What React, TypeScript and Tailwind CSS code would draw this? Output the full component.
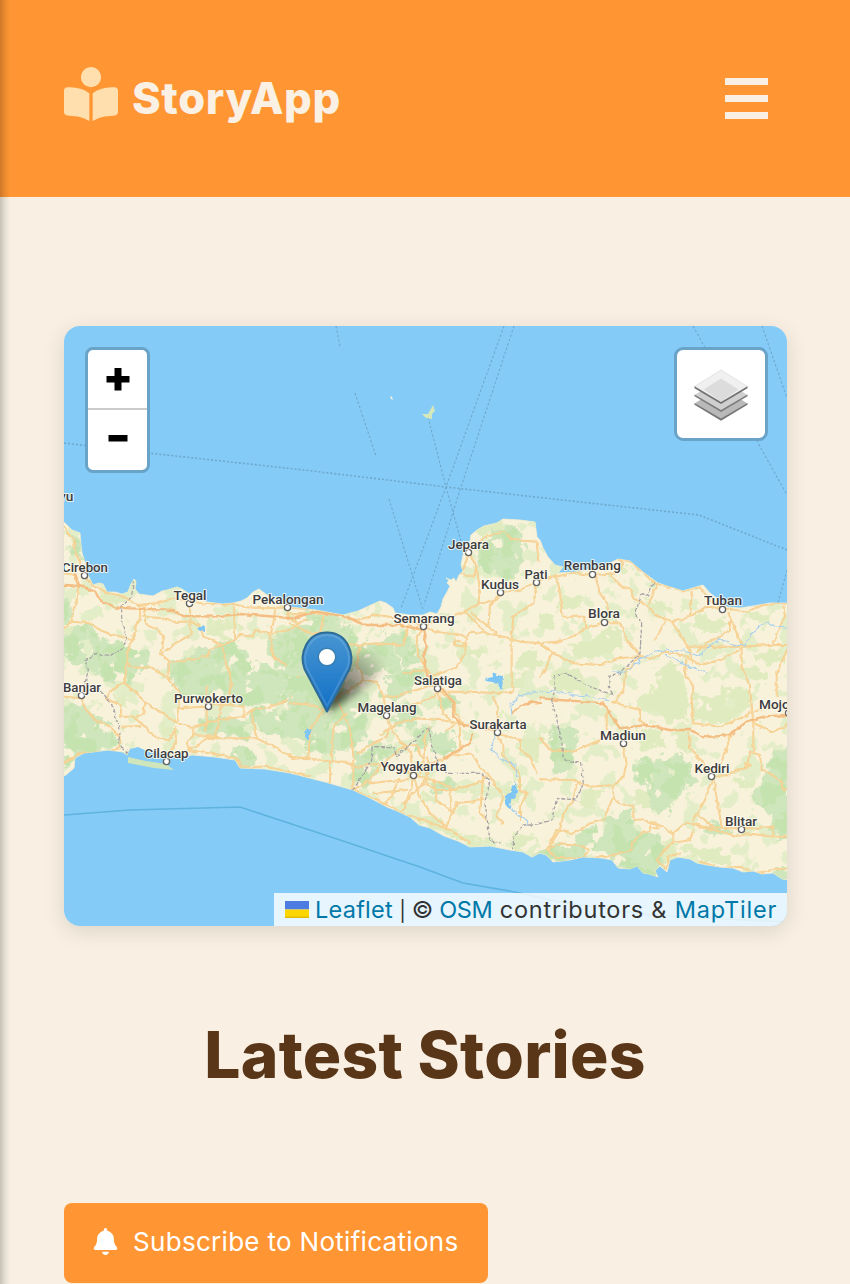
import { FaBookOpenReader, FaBell } from "react-icons/fa6";

const LAND =
  "M60 519 L66 524 72 530 80 533 81 545 82 553 85 562 88 575 93 585 99 583 103 584 107 592 115 592 122 594 128 592 131 584 134 579 136 581 135 589 139 594 153 596 162 591 167 590 177 587 182 589 188 593 197 598 207 602 223 604 233 603 241 601 247 598 253 592 259 589 267 595 277 600 290 607 316 610 343 615 358 611 371 605 380 601 386 603 393 608 395 613 410 615 423 615 430 612 437 614 441 607 443 599 447 592 450 586 447 583 449 580 446 578 451 580 454 578 456 582 459 575 463 571 461 565 463 555 465 547 470 541 471 535 477 530 484 526 497 523 503 519 520 520 535 522 537 537 540 540 543 548 548 557 555 565 563 567 558 573 575 572 593 569 606 565 618 559 630 561 643 572 658 583 670 587 683 591 696 587 703 585 710 593 719 600 727 607 740 608 753 606 770 603 790 603 L790 880 782 879 773 873 762 874 753 871 743 872 733 868 720 867 707 865 697 863 690 859 678 857 670 860 667 872 660 866 655 871 658 877 649 874 643 873 637 866 630 869 618 868 612 860 602 858 583 857 570 860 553 862 546 855 540 853 532 857 523 852 510 850 490 846 470 847 458 841 444 836 430 828 419 825 410 817 397 811 387 807 370 798 353 790 325 782 290 773 265 769 240 768 235 760 215 757 193 755 170 757 150 758 138 753 130 748 127 755 123 752 108 750 93 752 84 753 75 758 74 768 66 775 60 777Z";

// Each region is drawn on its own grid of three units to a map pixel.
const WEST = {
  forest: [
    "M10 460 L60 410 100 420 120 450 175 465 205 475 265 500 260 530 210 535 200 575 140 570 110 545 70 520 10 490Z",
    "M10 650 L70 660 110 690 150 710 170 760 110 780 50 795 12 820Z",
    "M325 530 L380 510 460 475 510 455 590 530 640 540 690 560 690 620 610 645 570 640 510 620 480 600 440 610 360 600 340 570Z",
    "M630 445 L700 430 750 430 750 640 700 620 710 540 650 510 625 480Z",
    "M470 700 L550 690 580 720 560 740 470 735Z",
    "M585 665 L660 670 720 690 750 710 750 750 640 730 580 710Z",
    "M205 790 L300 810 335 840 280 835 200 825Z",
    "M530 780 L570 790 575 825 535 830Z",
    "M40 140 L65 150 60 195 45 200Z",
    "M12 330 L25 350 30 390 12 400Z",
    "M420 690 L460 700 455 730 430 720Z",
  ],
  grove: [
    "M440 400 L510 390 550 415 540 450 470 445 430 430Z",
    "M150 600 L190 610 210 660 170 640Z",
    "M340 520 L380 520 370 570 340 560Z",
    "M130 310 L200 330 180 345 120 330Z",
    "M650 410 L700 400 720 430 640 440Z",
    "M310 700 L350 715 340 750 300 720Z",
    "M12 420 L60 410 90 430 30 450Z",
  ],
  roads: [
    "M12 110 L38 145 50 190 62 225 80 265 100 285 140 308 190 320 235 345 290 340 345 325 390 335 450 343 520 342 560 352 620 355 680 352 750 358",
    "M12 250 L45 255 55 285 50 330 40 360 35 395 12 415",
    "M35 395 L90 400 120 420 150 432 220 448",
    "M240 345 L240 380 220 440 205 475 200 520 195 575 150 605 140 625 185 650 180 680 220 680 260 715 290 745 325 750 350 715 345 760 335 780",
    "M255 350 L255 400 290 415 312 440 308 465 300 490 330 515 400 508 440 500 450 475 490 465 520 450 540 435 580 440 585 420 630 430 690 420 715 400 750 380",
    "M250 380 L310 385 340 395 390 395 420 405 430 440 485 465 495 510 515 580 505 620 480 655 475 700 465 740 400 735 380 755 385 775 410 770 440 745 530 745 590 745 640 770 700 805 750 808",
    "M390 345 L392 435 345 460 308 488",
    "M522 342 L525 440", "M645 360 L640 400 630 440 640 500 690 535 725 545 700 580 690 630",
    "M205 520 L215 530 270 530 320 560 360 610 355 650 350 700",
    "M325 520 L325 555", "M195 580 L260 640 310 670 350 700 395 710 440 700 475 690 550 680 575 660 630 650 690 630 720 630 750 645",
    "M12 620 L65 625 75 655 105 690 150 710 180 740 180 775 140 785 60 790 12 820",
    "M185 710 L240 708", "M255 640 L250 670 230 680",
    "M350 655 L435 650 470 640 550 650 550 680", "M440 650 L440 700 435 725",
    "M575 660 L580 700 590 745", "M400 710 L400 740", "M385 780 L480 795 530 805 545 830 620 830 750 860",
    "M440 650 L440 590", "M683 355 L685 380 710 400",
  ],
  highways: [
    "M12 285 L55 287 105 305 120 330 165 353 230 356 340 360 370 378 460 380 540 372 620 378 700 385 750 370",
    "M45 250 L58 290",
  ],
  borders: ["M220 270 L215 320 185 350 185 400 200 440 190 475 150 497 110 490 75 510 85 540 75 580 120 598 160 650 180 730 175 760 205 790"],
};

const CENTRAL = {
  forest: [
    "M570 170 L610 140 650 110 690 140 690 210 670 260 610 240 570 220Z",
    "M0 430 L80 400 170 410 200 460 180 600 190 620 230 650 220 740 170 780 70 780 50 720 0 700Z",
    "M180 480 L260 460 310 470 330 540 290 550 220 540Z",
    "M330 475 L380 470 390 510 350 525Z",
    "M290 580 L350 545 400 555 370 590 320 620 280 610Z",
    "M170 630 L220 610 230 640 200 680 170 670Z",
    "M300 665 L380 650 400 680 360 700 310 695Z",
    "M370 720 L415 710 425 770 395 765Z",
    "M435 740 L490 730 490 770 460 790 430 775Z",
    "M200 790 L240 780 260 850 220 890 190 870Z",
    "M240 770 L300 765 310 790 270 800Z",
    "M290 430 L340 440 350 465 280 460Z",
    "M460 610 L500 630 490 650 455 640Z",
    "M430 880 L480 870 490 890 440 900Z",
    "M60 370 L130 375 150 390 80 390Z",
  ],
  grove: [
    "M500 470 L580 480 570 510 500 500Z", "M680 490 L750 480 750 540 670 530Z",
    "M640 560 L710 550 700 590 640 590Z", "M360 980 L440 990 500 1030 620 1060 550 1070 440 1020Z",
    "M640 900 L700 880 690 930 640 940Z", "M670 1030 L750 1050 750 1090 670 1070Z",
    "M580 90 L650 90 620 130 560 140Z", "M400 900 L450 920 430 950 400 940Z",
    "M500 890 L560 900 550 920 500 910Z", "M690 750 L750 740 750 820 700 800Z",
  ],
  roads: [
    "M0 370 L60 368 140 375 200 390 260 375 310 382 360 395 400 410 440 425 530 440 545 425 620 435 690 455 750 460",
    "M0 400 L40 420 100 440 130 460 210 465 260 460 340 465 350 430 355 405",
    "M400 410 L440 390 510 370 560 345 610 330 640 305 690 300 730 280 750 270",
    "M535 190 L525 230 510 250 550 260 560 230 540 195 M560 230 L570 300 565 340",
    "M540 170 L590 140 640 125 670 150 740 155 745 210",
    "M632 310 L600 345 595 410 M525 365 L570 410 590 430",
    "M545 370 L620 430", "M740 280 L730 340 670 380 665 440 665 480 665 570 670 605 620 610 540 605 450 605",
    "M530 445 L525 490 500 530 450 550 420 565",
    "M495 450 L530 460 520 470 495 465 495 445",
    "M210 465 L200 520 220 570 180 600 140 625 160 670 180 720 190 790 190 900",
    "M220 570 L260 575 280 620 290 670 300 710 330 750 360 785 370 850 365 890 340 960",
    "M285 620 L320 620 380 600 440 580",
    "M340 550 L400 540 420 565 450 600 430 620 380 640 330 660",
    "M270 735 L320 700 380 685 450 690 510 700",
    "M0 640 L70 645 100 660 60 720 55 805 M0 800 L60 805 120 815 170 815 200 835 250 820 310 830 370 855",
    "M120 815 L120 880 M170 670 L130 710 125 810",
    "M300 710 L290 740 200 790 M190 900 L240 870 270 830 340 770 380 765 400 810 410 880 440 900 490 900 560 880 590 860",
    "M370 855 L320 880 300 930 280 945 M370 855 L430 870 440 930 490 970 500 940 580 930",
    "M370 855 L390 920 420 970 470 1010 485 970 480 890 430 870 M240 880 L330 870 M250 910 L350 900 M340 940 L400 880 420 830 410 800",
    "M440 580 L460 670 490 700 M450 605 L495 640 495 665 520 700 M510 700 L510 780 M495 705 L470 720 M510 780 L470 805 420 820",
    "M470 800 L545 790 570 830 600 860 640 920 620 980 640 1000 M620 730 L640 770 640 800 690 850 690 900 710 910 690 950 690 990",
    "M620 730 L690 750 690 780 720 800 740 850 M620 730 L625 660 610 620",
    "M190 900 L280 940 350 975 400 990 480 1020 540 1060",
    "M100 380 L90 430 60 430 M415 710 L405 760 M580 860 L570 970 590 990",
    "M400 410 L380 440 385 500 420 550 M405 740 L405 790 390 850",
  ],
  highways: [
    "M0 385 L80 365 170 380 220 405 330 405 400 420 410 470 400 500 410 550 460 600 490 640 490 680 520 705 550 710 620 720",
    "M550 730 L540 760 490 790 460 805", "M665 670 L690 650 730 635 750 640",
  ],
  borders: ["M190 900 L245 810 250 770 310 770 320 800 415 710 435 800 470 850 570 850 600 870 585 940 600 1050 630 1060", "M670 1080 L670 1040 700 1005 750 1005"],
};

const EAST = {
  forest: [
    "M290 800 L350 775 390 780 420 770 460 830 430 860 400 890 380 930 340 920 330 860 290 830Z",
    "M40 680 L80 690 110 710 90 760 80 810 40 820 35 740Z",
    "M120 1000 L180 970 240 950 275 920 280 1000 360 1010 360 1080 340 1130 280 1110 220 1095 220 1050 130 1030Z",
    "M0 1055 L60 1040 130 1045 130 1070 50 1080Z",
    "M690 780 L741 750 741 1000 710 1010 700 940 650 900Z",
    "M480 980 L530 970 570 990 520 1000Z",
    "M700 1110 L741 1110 741 1140Z",
  ],
  grove: [
    "M60 295 L130 290 130 330 60 330Z", "M0 345 L50 350 40 380 0 390Z",
    "M90 430 L160 410 230 375 250 440 200 470 110 480Z", "M30 510 L110 510 150 560 200 570 200 590 40 570Z",
    "M270 600 L340 560 380 480 420 500 440 560 450 670 390 680 330 630Z",
    "M460 590 L530 580 570 550 630 570 630 630 560 670 470 660Z",
    "M560 520 L620 500 690 510 680 540 600 535Z", "M640 460 L730 450 740 490 660 490Z",
    "M470 330 L560 370 540 400 460 390Z", "M630 335 L690 345 680 365 600 370Z",
    "M280 700 L360 690 390 750 310 750Z", "M400 680 L440 700 450 760 420 750Z",
    "M340 1070 L390 1010 450 1040 430 1080 380 1110Z", "M440 1040 L530 1050 620 1090 570 1100 450 1070Z",
    "M140 870 L190 880 160 920 100 930Z", "M280 870 L330 870 330 920 280 910Z",
    "M310 290 L380 310 400 340 330 330Z", "M240 190 L265 205 245 220Z", "M580 840 L640 830 640 860 590 860Z",
  ],
  roads: [
    "M0 240 L50 230 100 218 160 225 230 220 250 190 235 180 270 183 310 215 345 250 430 272 480 262 510 300 550 325 620 335 670 315 741 310",
    "M50 225 L60 280 68 350 130 350 140 385 M165 225 L180 280 200 310 205 330 M210 220 L245 260 270 265 280 295 320 315 345 345 400 365 450 350 500 320 550 325",
    "M0 430 L50 425 100 408 140 385 180 370 240 370 260 420 300 465",
    "M0 430 L40 460 100 490 180 495 240 475 300 468 340 475 380 455 440 470 480 495 540 480 600 450",
    "M350 255 L325 315 M455 275 L450 350 M395 365 L440 430 460 490 M375 365 L345 420",
    "M570 340 L570 390 500 430 470 455 M565 340 L605 435 605 500 630 560 640 670 640 760",
    "M440 440 L530 440 600 440 690 435 741 435 M730 320 L735 350 710 400 700 435 M741 450 L710 520 710 590",
    "M440 470 L435 520 460 560 455 600 460 670 540 680 600 655 640 635 710 620 M0 530 L15 515 35 455",
    "M300 470 L255 520 250 570 220 610 M220 605 L260 620 300 630 300 660 320 680 M200 620 L200 690",
    "M0 715 L30 750 100 755 180 720 M250 740 L260 790 250 830 220 855 220 890 240 910 280 920 280 955 350 970 400 1000 440 965 490 980 560 985 640 985 700 980 700 1010 741 1010",
    "M0 838 L100 840 150 860 220 855 M220 890 L190 960 150 970 100 1000 50 990 20 1050 50 1070 130 1075 200 1070 270 1050 290 1010 330 990 330 970 355 975 355 985 330 985",
    "M445 690 L450 740 500 805 M570 710 L550 780 510 830 M520 835 L545 980 M520 830 L495 900 460 960 M515 830 L560 825 620 800 630 755 660 765 665 805 720 840 730 870 741 865",
    "M640 670 L700 695 741 675 M620 800 L615 790 635 795 Z M460 990 L450 1020 390 1030 350 1080 380 1110 385 1070 420 1060",
    "M600 1010 L620 1000 700 1010 M460 975 L600 1010 M470 940 L520 980 M400 1000 L400 1030",
    "M110 850 L100 900 70 940 60 990 20 1050 60 1030 120 1035 145 1050 130 1075",
    "M480 1085 L540 1105 600 1100 640 1120 700 1110 741 1105",
  ],
  highways: ["M0 595 L60 600 130 605 190 610 215 650 240 685 320 675 390 690 450 690 490 712 570 705 620 665 670 650 741 645"],
  borders: ["M340 250 L325 285 305 285 285 340 305 370 300 460 240 520 210 525 205 560 220 585 150 560 80 520 45 530 45 570 35 600 60 700 75 780 125 790 130 850 110 900 50 895 35 960 0 970"],
};

function Region({ data, at }: { data: typeof WEST; at: string }) {
  return (
    <g transform={at} fill="none" strokeLinejoin="round" strokeLinecap="round">
      <g filter="url(#rough)">
        {data.grove.map((d) => <path key={d} d={d} fill="#e0ecc0" />)}
        {data.forest.map((d) => <path key={d} d={d} fill="#cfe5bb" stroke="#cfe5bb" strokeWidth="16" />)}
      </g>
      <g filter="url(#dense)">
        {data.forest.map((d) => <path key={d} d={d} fill="#c5e3ae" />)}
      </g>
      <g filter="url(#wiggle)">
        {data.roads.map((d) => <path key={d} d={d} stroke="#f5cc8c" strokeWidth="5.8" />)}
        {data.roads.map((d) => <path key={d + "c"} d={d} stroke="#fadba2" strokeWidth="2.2" />)}
        {data.highways.map((d) => <path key={d} d={d} stroke="#f4bd82" strokeWidth="7" />)}
        {data.borders.map((d) => <path key={d} d={d} stroke="#a5a1a4" strokeWidth="3.8" strokeDasharray="9 8" />)}
      </g>
    </g>
  );
}

const CITIES: [string, number, number, number, number, number][] = [
  ["Cirebon", 85, 571.5, 46, 84.5, 575.5],
  ["Tegal", 190, 599.5, 33, 189.5, 603.5],
  ["Pekalongan", 288, 604, 71, 287.5, 607.5],
  ["Jepara", 468.5, 549, 41, 468.5, 552.5],
  ["Kudus", 500, 588.5, 38, 500.5, 592.5],
  ["Pati", 536, 578.5, 23, 536.5, 582.5],
  ["Rembang", 592.3, 570, 57, 592.5, 574.5],
  ["Semarang", 424, 622.5, 61, 423.5, 626.5],
  ["Blora", 604, 618, 32, 604.5, 622.5],
  ["Tuban", 723, 605, 38, 722.5, 609.5],
  ["Salatiga", 438, 684.5, 48, 437.5, 688.5],
  ["Purwokerto", 208.5, 702.5, 69, 208.5, 706.5],
  ["Magelang", 387, 711.5, 59, 386.5, 715.5],
  ["Banjar", 82, 691.5, 38, 81.5, 695.5],
  ["Surakarta", 498, 728.5, 57, 497.5, 732.5],
  ["Madiun", 623, 739.5, 46, 623.5, 743.5],
  ["Yogyakarta", 413.5, 771, 66, 413.5, 775.5],
  ["Cilacap", 166.5, 757.5, 44, 166.5, 761.5],
  ["Kediri", 712, 773, 35, 711.5, 776.5],
  ["Blitar", 741, 825.5, 32, 741.5, 829.5],
];

const label = {
  fontFamily: "Roboto, 'Liberation Sans', sans-serif",
  fontSize: 13.6,
  fontWeight: 500,
  fill: "#3c3c40",
  stroke: "#fffdf5",
  strokeOpacity: 0.8,
  strokeWidth: 2,
  strokeLinejoin: "round",
  paintOrder: "stroke",
} as const;

function MapCanvas() {
  return (
    <svg className="block h-full w-full" viewBox="64 326 723 600" role="img" aria-label="Story locations">
      <defs>
        <filter id="rough" x="-5%" y="-5%" width="110%" height="110%">
          <feTurbulence type="fractalNoise" baseFrequency="0.03" numOctaves="5" seed="4" />
          <feDisplacementMap in="SourceGraphic" scale="50" xChannelSelector="R" yChannelSelector="G" result="shape" />
          <feTurbulence type="fractalNoise" baseFrequency="0.02" numOctaves="4" seed="21" />
          <feColorMatrix values="0 0 0 0 0  0 0 0 0 0  0 0 0 0 0  0 24 0 0 -7.6" result="gaps" />
          <feComposite in="shape" in2="gaps" operator="in" />
        </filter>
        <filter id="dense" x="-5%" y="-5%" width="110%" height="110%">
          <feTurbulence type="fractalNoise" baseFrequency="0.03" numOctaves="5" seed="4" />
          <feDisplacementMap in="SourceGraphic" scale="60" xChannelSelector="R" yChannelSelector="G" result="shape" />
          <feTurbulence type="fractalNoise" baseFrequency="0.018" numOctaves="4" seed="21" />
          <feColorMatrix values="0 0 0 0 0  0 0 0 0 0  0 0 0 0 0  0 24 0 0 -12" result="gaps" />
          <feComposite in="shape" in2="gaps" operator="in" />
        </filter>
        <filter id="wiggle" x="-5%" y="-5%" width="110%" height="110%">
          <feTurbulence type="fractalNoise" baseFrequency="0.05" numOctaves="2" seed="9" />
          <feDisplacementMap in="SourceGraphic" scale="12" xChannelSelector="R" yChannelSelector="G" />
        </filter>
        <filter id="ripple" x="-5%" y="-5%" width="110%" height="110%">
          <feTurbulence type="fractalNoise" baseFrequency="0.18" numOctaves="2" seed="3" />
          <feDisplacementMap in="SourceGraphic" scale="6" xChannelSelector="R" yChannelSelector="G" />
        </filter>
        <filter id="speckle" x="0" y="0" width="100%" height="100%" colorInterpolationFilters="sRGB">
          <feTurbulence type="fractalNoise" baseFrequency="0.05" numOctaves="4" seed="12" />
          <feColorMatrix values="0 0 0 0 0.89  0 0 0 0 0.93  0 0 0 0 0.78  0 18 0 0 -10" />
        </filter>
        <filter id="soft" x="-50%" y="-50%" width="200%" height="200%"><feGaussianBlur stdDeviation="4" /></filter>
        <clipPath id="land"><path d={LAND} /></clipPath>
        <linearGradient id="pin" x1="0" y1="0" x2="0" y2="1">
          <stop offset="0" stopColor="#4796d2" />
          <stop offset="1" stopColor="#126fc6" />
        </linearGradient>
        <linearGradient id="shade" x1="0" y1="1" x2="1" y2="0">
          <stop offset="0" stopColor="#000" stopOpacity=".85" />
          <stop offset=".5" stopColor="#000" stopOpacity=".4" />
          <stop offset=".95" stopColor="#000" stopOpacity="0" />
        </linearGradient>
      </defs>
      <rect x="64" y="326" width="723" height="600" fill="#84cbf8" />
      <g fill="none" stroke="#6fa9cb" strokeWidth="1.1" strokeDasharray="2.500 2">
        <path d="M64 443 L148 453 304 470 446 487 562 500 699 515 787 550" strokeWidth="1.6" strokeDasharray="2 2" />
        <path d="M336 326 L340 347 M355 393 L376 456 M389 499 L423 610 M504 326 L446 487 401 608 M514 326 L460 490 424 605 M428 417 L446 487 461 541 M693 326 L787 495 M762 326 L787 398 M787 570 L778 603" />
      </g>
      <path d="M64 815 L130 810 240 807 340 840 420 867 463 883 515 892 560 902 650 915 787 922" fill="none" stroke="#5fb3df" strokeWidth="1.6" />
      <path d="M422 414 L428 414 433 405 435 411 432 414 432 419 426 418Z" fill="#d4e8bc" />
      <path d="M390 396 l2 1 1 3 -2 -1Z M384 404 l1 1 M456 417 l1 1" fill="#f9f2dc" />
      <path d={LAND} fill="#f9f2db" stroke="#f5edcf" strokeWidth=".8" />
      <g clipPath="url(#land)">
        <rect x="64" y="500" width="723" height="390" filter="url(#speckle)" />
        <Region data={WEST} at="translate(60 490) scale(.33333)" />
        <Region data={CENTRAL} at="translate(290 490) scale(.33333)" />
        <Region data={EAST} at="translate(540 500) scale(.33333)" />
        <g fill="none" stroke="#a7d0ee" strokeWidth="1.1" filter="url(#ripple)">
          <path d="M540 691 L560 692 575 695 590 696 610 700 M613 672 L625 672 640 660 652 653 665 650 675 652 684 650 698 656 705 651 712 644 720 639 735 646 745 645 753 632 765 622 774 626 787 627" />
          <path d="M666 655 L677 660 690 667 708 672 M538 691 L520 696 511 705 512 716 M498 732 L490 748 500 758 515 765 518 778 M511 808 L530 824" />
        </g>
        <g fill="#7cc5f5" filter="url(#ripple)">
          <path d="M485 679 l7 -2 2 -4 7 2 3 5 -3 10 -5 -7 -10 -2Z" />
          <path d="M516 782 l1 11 -6 8 -1 7 -5 -4 1 -9 5 -3 1 -6Z" />
          <path d="M198 628 l4 -2 4 2 -2 4 -3 -1Z M305 732 l3 -5 3 4 -2 8 -4 -2Z" />
        </g>
      </g>
      <path d="M130 749 l8 -2 11 5 12 1 6 5 -7 5 -17 -7 -10 -1Z" fill="#84cbf8" />
      <path d="M128 757 l18 4 20 3 8 6 -20 -2 -26 -5Z" fill="#cfe5bb" />

      {/* marker */}
      <path d="M327 712 C327 700 337 662 360 653 C378 647 390 657 380 671 C372 684 347 700 327 712Z" fill="url(#shade)" filter="url(#soft)" />
      <path d="M327 711.5 L304.5 669 C299 655 306 632.500 327 632.500 C348 632.500 355 655 349.500 669Z" fill="url(#pin)" stroke="#2e6c97" strokeWidth="2" strokeLinejoin="round" />
      <path d="M327 706 L306.500 667.500 C302 655 309 635 327 635 C345 635 352 655 347.500 667.500Z" fill="none" stroke="#fff" strokeOpacity=".13" strokeWidth="2" />
      <circle cx="327" cy="657" r="8.800" fill="#fff" stroke="#3a7fb2" strokeWidth="1.600" />

      <g fill="#fff" stroke="#626262" strokeWidth="1.300">
        {CITIES.map(([name, , , , x, y]) => <circle key={name} cx={x} cy={y} r="3.100" />)}
        <circle cx="788.5" cy="713" r="3.100" />
      </g>
      <g textAnchor="middle" {...label}>
        {CITIES.map(([name, x, y, w]) => (
          <text key={name} x={x} y={y} textLength={w} lengthAdjust="spacingAndGlyphs">{name}</text>
        ))}
      </g>
      <text x="59" y="500.500" {...label}>yu</text>
      <text x="759" y="709" {...label}>Mojokerto</text>
    </svg>
  );
}

function LayersIcon() {
  return (
    <svg className="mt-[2px] h-[54px] w-[54px]" viewBox="0 0 54 54">
      <path d="M.5 35.500 L27 19 53.500 35.500 27 51.500Z" fill="#b9b9b9" />
      <path d="M.5 35 v1.800 L27 52.800 53.500 36.800 V35 L27 50.500Z" fill="#777" />
      <path d="M.5 27 L27 11 53.500 27 27 43.500Z" fill="#cfcfcf" />
      <path d="M.5 26.500 v1.800 L27 44 53.500 28.300 V26.500 L27 42Z" fill="#7c7c7c" />
      <path d="M.5 18.500 L27 2 53.500 18.500 27 35Z" fill="#f0f0f0" stroke="#d5d5d5" strokeWidth=".6" />
      <path d="M9.500 21.500 L27 10.500 44.500 21.500 27 34Z" fill="#dcdcdc" />
      <path d="M.5 18.300 v2 L27 36 53.500 20.300 V18.300 L27 34Z" fill="#727272" />
    </svg>
  );
}

export default function App() {
  return (
    <div className="relative h-[1284px] w-full overflow-hidden bg-[#f9f0e3] font-['Inter','Open_Sans',sans-serif]">
      <header className="flex h-[197px] items-center justify-between bg-[#ff9633] pl-16 pr-[82px]">
        <a href="#" className="flex items-center">
          <FaBookOpenReader className="mb-[9px] h-[54px] w-[54px] text-[#ffdfad]" />
          <span className="ml-[14px] whitespace-nowrap pt-px text-[43.5px] font-extrabold leading-none tracking-[0.65px] text-[#faf0e3]">StoryApp</span>
        </a>
        <button aria-label="Menu" className="mb-px flex flex-col gap-[10px]">
          <span className="block h-[7px] w-[43px] bg-[#f9f0e3]" />
          <span className="block h-[7px] w-[43px] bg-[#f9f0e3]" />
          <span className="block h-[7px] w-[43px] bg-[#f9f0e3]" />
        </button>
      </header>

      <main className="flex flex-col px-16 pt-[129px]">
        <section className="relative h-[600px] w-[723px] overflow-hidden rounded-[16px] shadow-[0_5px_22px_rgba(0,0,0,0.12)]">
          <MapCanvas />
          <div className="absolute left-[21px] top-[21px] flex h-[126px] w-[65px] flex-col rounded-[8px] border-[3px] border-[#6aa3c8] bg-white">
            <button aria-label="Zoom in" className="flex h-[60px] items-center justify-center border-b-2 border-[#ccc]">
              <svg className="h-[24px] w-[24px]" viewBox="0 0 24 24"><path d="M8.500 1h7v8h8v6.500h-8v8h-7v-8h-8V9h8z" /></svg>
            </button>
            <button aria-label="Zoom out" className="flex h-[57px] items-center justify-center">
              <svg className="h-[7px] w-[20px]" viewBox="0 0 20 7"><path d="M.5 0h19v6.500H.5z" /></svg>
            </button>
          </div>
          <button aria-label="Layers" className="absolute right-[19px] top-[21px] flex h-[94px] w-[94px] items-center justify-center rounded-[9px] border-[3px] border-[#6aa3c8] bg-white">
            <LayersIcon />
          </button>
          <div className="absolute bottom-0 right-0 flex h-[33px] w-[513px] items-center bg-white/80 pl-[11px] text-[23.5px] text-[#333]">
            <svg className="mr-[6px] h-[17px] w-[24px]" viewBox="0 0 24 17">
              <path d="M0 0h24v8.500H0z" fill="#4c7be1" />
              <path d="M0 8.500h24V17H0z" fill="#ffd500" />
              <path d="M0 15.500h24V17H0z" fill="#e0bc00" />
            </svg>
            <span className="whitespace-pre tracking-[-0.35px]">
              <a className="tracking-[0.25px] text-[#0078a8]" href="#">Leaflet</a> <span className="text-[20px]">|</span> © <a className="text-[#0078a8]" href="#">OSM</a><span className="tracking-[0.76px]"> contributors &amp; </span><a className="tracking-[0.82px] text-[#0078a8]" href="#">MapTiler</a>
            </span>
          </div>
        </section>

        <h1 className="mt-[96px] whitespace-nowrap text-center text-[64px] font-extrabold leading-[66px] tracking-[0.3px] text-[#5a3619]">Latest Stories</h1>

        <button className="mt-[115px] flex h-[80px] w-[424px] items-center rounded-[8px] bg-[#ff9633] pb-[3px] pl-[28px] text-[26px] text-white">
          <FaBell className="h-[27px] w-[27px]" />
          <span className="ml-[14px] whitespace-nowrap tracking-[0.3px]">Subscribe to Notifications</span>
        </button>
      </main>
      <div className="pointer-events-none absolute left-0 top-0 h-full w-[10px] bg-linear-to-r from-black/20 via-black/8 to-transparent" />
    </div>
  );
}
